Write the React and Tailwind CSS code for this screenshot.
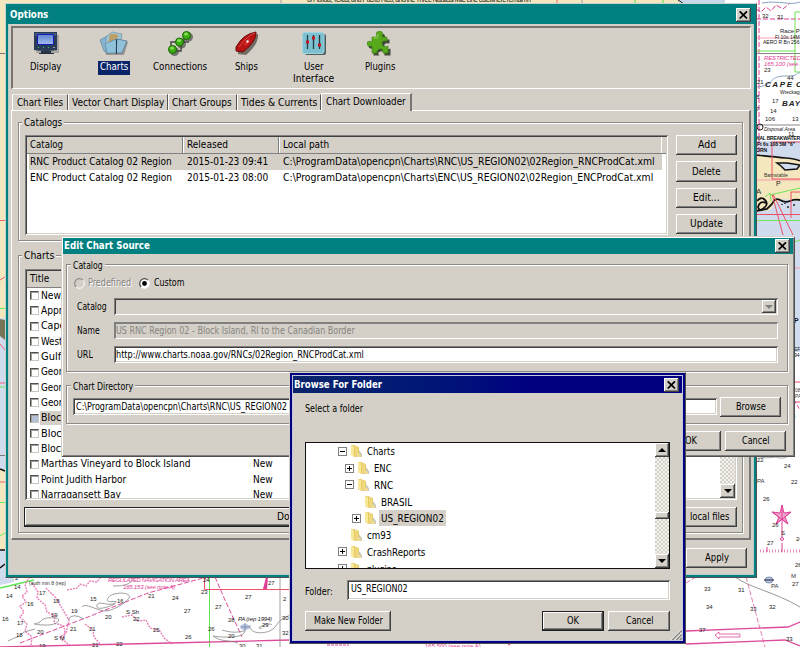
import { useLayoutEffect, useRef, useState } from "react";

const RAISED = "bg-[#d4d0c8] shadow-[inset_-1px_-1px_0_#404040,inset_1px_1px_0_#fff,inset_-2px_-2px_0_#808080]";
const SUNKEN = "shadow-[inset_1px_1px_0_#808080,inset_-1px_-1px_0_#fff,inset_2px_2px_0_#404040,inset_-2px_-2px_0_#d4d0c8]";

// Text condensed horizontally to occupy exactly w pixels.
function T({ w, children, className = "" }) {
  const ref = useRef(null);
  const [s, setS] = useState(1);
  useLayoutEffect(() => {
    setS(w / ref.current.offsetWidth);
  }, [w, children]);
  return (
    <span className={"block shrink-0 whitespace-nowrap " + className} style={{ width: w }}>
      <span ref={ref} className="inline-block origin-left" style={{ transform: `scaleX(${s})` }}>
        {children}
      </span>
    </span>
  );
}

function Btn({ children, w, className = "", dark }) {
  return (
    <div className={`flex shrink-0 items-center justify-center ${RAISED} ${dark ? "border border-[#202020]" : ""} ${className}`}>
      {w ? <T w={w}>{children}</T> : children}
    </div>
  );
}

function Close() {
  return (
    <div className={`flex h-[14px] w-[15px] items-center justify-center ${RAISED}`}>
      <svg width="9" height="8" viewBox="0 0 9 8" stroke="#000" strokeWidth="1.7">
        <path d="M0.7 0.3 8 7.5M8 0.3 0.7 7.5" />
      </svg>
    </div>
  );
}

function Group({ label, lw, className = "", children, big }) {
  return (
    <div className={`relative border border-[#8c8a86] shadow-[1px_1px_0_#fff,inset_1px_1px_0_#fff] ${className}`}>
      <div className={`absolute bg-[#d4d0c8] px-[2px] leading-[13px] ${big ? "top-[-7px] left-[3px]" : "top-[-6px] left-[4px]"}`}>
        <T w={lw}>{label}</T>
      </div>
      {children}
    </div>
  );
}

function Arrow({ up, grey }) {
  return (
    <svg width="8" height="4" viewBox="0 0 8 4" fill={grey ? "#808080" : "#000"}>
      <path d={up ? "M0 4H8L4 0Z" : "M0 0H8L4 4Z"} />
    </svg>
  );
}

const DITHER = "bg-[repeating-conic-gradient(#d4d0c8_0_25%,#f4f3f0_0_50%)] bg-[length:4px_4px]";

/* ---------- nautical chart behind the windows ---------- */
const soundings = [
  [9, 598, "14"], [5, 621, "16"], [30, 606, "16"], [42, 595, "17"], [56, 603, "18"], [54, 617, "19"], [74, 613, "19"],
  [20, 625, "17"], [19, 637, "18"], [40, 634, "20"], [73, 631, "21"], [92, 631, "21"], [108, 619, "20"], [136, 621, "22"],
  [93, 601, "15"], [120, 603, "16"], [151, 598, "21"], [175, 600, "24"], [187, 613, "27"], [156, 632, "25"], [188, 639, "26"],
  [95, 647, "21"], [119, 646, "22"], [42, 648, "19"], [204, 594, "23"], [206, 582, "24"], [248, 599, "27"], [218, 609, "27"],
  [231, 622, "28"], [211, 631, "26"], [231, 638, "20"], [265, 627, "29"], [271, 585, "27"], [286, 601, "2"], [285, 620, "30"],
  [285, 635, "32"], [242, 648, "30"], [259, 648, "31"], [17, 589, "14"], [18, 580, "2"],
  [707, 591, "33"], [741, 592, "31"], [709, 609, "34"], [753, 611, "33"], [772, 609, "32"], [702, 632, "37"], [789, 641, "33"],
  [760, 462, "22"], [787, 468, "24"], [794, 484, "22"], [766, 501, "26"], [775, 527, "26"], [770, 545, "27"], [799, 541, "24"],
  [798, 567, "26"], [795, 586, "27"], [765, 18, "32"], [780, 19, "31"], [767, 72, "23"], [773, 113, "14"], [775, 103, "17"],
  [768, 121, "106"], [795, 121, "13"], [791, 136, "11"], [795, 418, "8"], [790, 80, "44"], [760, 84, "21"], [759, 99, "8"], [759, 111, "7"],
];

function ChartMap() {
  return (
    <svg className="absolute inset-0" width="800" height="647" fontFamily="'Liberation Sans', Arial, sans-serif" fill="none">
      <rect width="800" height="647" fill="#fff" />
      <rect width="680" height="4" fill="#f4e7bd" />
      <path d="M678 0H725V4H683Z" fill="#c9d7ea" />
      <path d="M678 0 684 4" stroke="#111" />
      <path d="M557 0V4" stroke="#e66" /><path d="M582 0V4M281 0V4" stroke="#999" />
      <path d="M635 0V4M663 0V4" stroke="#5d5" />
      <text x="307" y="2" fontSize="7" fill="#222" textLength="224">of Florida, Texas, and Puerto Rico, and the Three Nautical Mile Line elsewhere remain in</text>
      {/* left strip */}
      <rect y="0" width="6" height="320" fill="#f4e7bd" />
      <rect y="318" width="6" height="155" fill="#d1dbee" />
      <rect y="470" width="6" height="80" fill="#f4e7bd" />
      <rect y="550" width="6" height="30" fill="#d1dbee" />
      <path d="M0 319 5 320 5 340 0 336Z" fill="#777456" />
      <path d="M0 53.500H5M0 455.500H5" stroke="#777" />
      <path d="M0 220.500H5M0 280 5 277M0 344 5 350M0 383H5M0 482H5" stroke="#f0607a" />
      <path d="M0 308.500H5M0 387H5M0 502.500H5M0 536 5 533" stroke="#6e5" />
      <path d="M0 469 5 471M0 550H5M0 568 5 564" stroke="#111" strokeWidth="1.500" />
      {/* right side: bay and coast */}
      <path d="M756 141H800V330H756Z" fill="#d1dbee" />
      <path d="M794 230H800V352H794Z" fill="#d1dbee" />
      <path d="M756 154 800 160 800 201 783 199 775 203 770 210 756 212Z" fill="#f4e7bd" />
      <path d="M756 155Q775 157 786 158T800 161" stroke="#111" strokeWidth="1.500" />
      <path d="M777 163H787L800 165 797 169 785 170 781 166Z" fill="#d1dbee" stroke="#111" strokeWidth="1.500" />
      <path d="M756 211 767 209 772 204Q775 197 780 200T790 201 800 200" stroke="#111" strokeWidth="1.800" />
      <path d="M757 201Q761 196 765 200T764 208 758 207Q760 200 766 203" stroke="#111" strokeWidth="1.800" />
      <path d="M782 204v1M788 206v2M794 204v2M785 203v1" stroke="#222" strokeWidth="1.500" />
      <path d="M756 9 761 12 766 7 771 11 776 5 783 9 790 3M759 0V155M756 19H800" stroke="#de3e96" strokeDasharray="5 2" />
      <path d="M756 38H800M756 180H800M794 268H800" stroke="#f6a0b0" />
      <path d="M772 143V179H800M772 142H800M791 218V192H800M756 214.500H800M772 194 783 235M773 194 793 235M794 382H800M794 402H800" stroke="#ee4f64" />
      <path d="M756 51H795V12H800M795 51V72H800M756 220.500H800M770 195 800 188M765 197 770 193 771 201M794 242 800 240" stroke="#70e455" />
      <path d="M756 53.500H800M756 125H800" stroke="#888" />
      <path d="M756 87C775 86 768 76 785 76S795 72 800 73M762 3C780 0 790 6 800 2" stroke="#8aa4c0" />
      <circle cx="760" cy="127" r="3" stroke="#222" />
      <text x="780" y="33" fontSize="6" fill="#222">Race Pt</text>
      <text x="775" y="39" fontSize="5" fill="#222">Fl 10s 14M</text>
      <text x="763" y="44" fontSize="5" fill="#111">AERO R Bn 256</text>
      <g fontSize="6" fill="#de3e96" fontStyle="italic"><text x="764" y="60" textLength="37">RESTRICTED</text><text x="764" y="66" textLength="39">165.100 (see n</text></g>
      <g fontStyle="italic" fontSize="8" fill="#222" fontWeight="bold"><text x="765" y="87" textLength="27">CAPE</text><text x="796" y="87">C</text><text x="782" y="106" textLength="18">BAY</text></g>
      <text x="780" y="94" fontSize="5" fill="#222">Wreckage</text>
      <text x="764" y="131" fontSize="5" fill="#222" fontStyle="italic">Disposal Area</text>
      <g fontSize="5" fill="#111" fontWeight="bold"><text x="756" y="140" textLength="44">NAL BREAKWATER</text><text x="757" y="146" textLength="38">Ft 6s 108 5M "6"</text><text x="756" y="152">ORN</text></g>
      <text x="764" y="177" fontSize="5" fill="#333">Barnstable</text>
      <text x="776" y="186" fontSize="7" fill="#222">P</text><text x="756" y="194" fontSize="8" fill="#333">A</text>
      <text x="794" y="323" fontSize="7" fill="#111" fontWeight="bold">P</text>
      <text x="794" y="351" fontSize="5" fill="#111">EF</text><text x="794" y="357" fontSize="5" fill="#111">94</text>
      <text x="795" y="392" fontSize="5" fill="#444">08</text><text x="795" y="398" fontSize="5" fill="#444">PA</text>
      <path d="M794 400 800 410" stroke="#de3e96" strokeDasharray="4 2" />
      {/* lower right: compass and lanes */}
      <path d="M782 505 784 513 791 512 785 517 788 524 782 519 776 524 779 517 772 512 780 513Z" fill="#f3a6cb" stroke="#de3e96" />
      <path d="M782 505V537M772 512 788 524M791 512 776 524" stroke="#de3e96" />
      <path d="M760 551H800" stroke="#e88abb" strokeWidth="3" strokeDasharray="1 2" />
      <path d="M782 543V552M767 547V552" stroke="#de3e96" />
      <circle cx="782" cy="539" r="1.500" stroke="#de3e96" />
      <path d="M686 583 696 577M746 577 765 647" stroke="#e57fb6" strokeDasharray="5 2" />
      <path d="M735 577C750 588 775 592 800 607" stroke="#999" />
      <path d="M686 631 788 627 800 622M686 644 785 640 800 646" stroke="#de4b9a" strokeWidth="1.300" />
      <path d="M715 635 719 632V634H740V637H719V639Z" stroke="#de4b9a" strokeWidth=".8" />
      <ellipse cx="769" cy="580" rx="4" ry="3" fill="#b8c5dc" stroke="#8092b8" /><path d="M764 580H774" stroke="#223" />
      <text x="771" y="588" fontSize="6" fill="#333">PA</text><text x="757" y="483" fontSize="6" fill="#333">PA</text><text x="791" y="578" fontSize="6" fill="#333">M</text><text x="781" y="535" fontSize="6" fill="#222">S</text>
      <path d="M756 456Q764 459 776 457Q784 461 795 452" stroke="#aaa" />
      {/* lower left */}
      <path d="M0 588 34 580" stroke="#5de552" strokeWidth="1.400" />
      <path d="M209.500 577V647" stroke="#5de552" />
      <path d="M204.500 577V589.500H290" stroke="#f05368" />
      <path d="M0 580 14 577V582L0 585Z" fill="#d1dbee" />
      <path d="M30 577 25 584 27 592 22 596 26 602 20 606 24 612 20 617 27 624 25 631 32 637 31 645M32 583 38 592 37 598 45 605 47 612 55 616 54 623 64 626 65 634 62 642M46 588 56 598 63 610 69 620 66 633 60 637 70 646M67 590 77 588 80 584 86 586 90 581 97 582 101 577M85 624 93 630 94 637 101 645M122 617 132 615 138 621 146 620 150 628 160 631 164 638 172 644" stroke="#e783b9" strokeDasharray="2 1" strokeWidth="1.400" />
      <path d="M20 643 88 617 148 593 207 577M215 577 225 600 242 637" stroke="#de4b9a" strokeDasharray="5 2" />
      <path d="M0 647 170 643 290 640" stroke="#de4b9a" strokeWidth="1.300" />
      <path d="M82 607C84 602 98 611 105 611S125 604 129 598 112 591 108 598 121 599 115 603 99 600 97 605 104 609 115 604M39 623C44 616 51 618 56 618S60 626 43 625 39 623 39 623M8 641C22 634 15 640 24 632L35 629M222 630C240 636 248 627 244 633S218 637 213 636C220 642 230 640 238 643M250 625C248 635 269 635 275 627S280 620 290 615M262 628C252 630 269 621 272 625M280 577V647M84 619Q72 612 68 620M135 577Q130 587 113 586" stroke="#888" strokeWidth=".8" />
      <g fill="#de3e96" fontSize="6" fontStyle="italic"><text x="108" y="582" textLength="82">REGULATED NAVIGATION AREA</text><text x="123" y="589" textLength="52">165.153 (see note A)</text></g>
      <text x="29" y="585" fontSize="5" fill="#333">(auth min 8 (rep)</text>
      <text x="126" y="614" fontSize="6" fill="#222">S Sh</text><text x="54" y="640" fontSize="6" fill="#222">S M</text>
      <text x="238" y="621" fontSize="6" fill="#222" fontStyle="italic" textLength="34">PA (rep 1994)</text>
      <ellipse cx="245" cy="627" rx="5" ry="3" fill="#b8c5dc" /><path d="M241 627H250M245 623V631" stroke="#8092b8" />
      <path d="M266 577 263 589H267L268 577Z" fill="#de3e96" />
      <g fontSize="6" fill="#222" fontFamily="'Liberation Sans'">
        {soundings.map(([x, y, t], i) => <text key={i} x={x - 3} y={y - 0.5}>{t}</text>)}
      </g>
      <text x="425" y="648" fontSize="6" fill="#de3e96">165.500 (see note A)</text>
      <path d="M327 645H349M508 645 515 642" stroke="#de3e96" strokeDasharray="3 1" />
    </svg>
  );
}

/* ---------- toolbar icons ---------- */
const icons = {
  display: (
    <svg width="28" height="26" viewBox="0 0 28 26">
      <path d="M4 4H27V22H4Z" fill="#8b8984" opacity=".6" />
      <path d="M2 1H25V19Q14 21 2 19Z" fill="#293c57" /><path d="M3 2H24V5H3Z" fill="#41587a" />
      <defs><linearGradient id="scr" x2="0" y2="1"><stop stopColor="#5f84cf" /><stop offset="1" stopColor="#a3bdee" /></linearGradient></defs>
      <path d="M5.500 3.500H21.500V13.500H5.500Z" fill="url(#scr)" stroke="#1818b8" />
      <path d="M6 16.500h1M11 16.500h1M16 16.500h1" stroke="#3c6" /><path d="M21 16.500h2" stroke="#999" />
      <path d="M9 20H19V22H22V23H7V22H9Z" fill="#26323f" />
    </svg>
  ),
  charts: (
    <svg width="30" height="26" viewBox="0 0 30 26">
      <path d="M5 9 29 11 25 24 7 24Z" fill="#77736c" opacity=".6" />
      <path d="M1 9 10 4 13 8 9 22 5 20Z" fill="#86b5cf" stroke="#587f96" strokeWidth=".6" />
      <path d="M7 6 13 1 23 3 22 8 18 22 7 22Z" fill="#a0c7d8" stroke="#5f879a" strokeWidth=".6" />
      <path d="M11 3 17 3 20 5 17 8 19 10 12 14 9 12 10 8Z" fill="#bd9e68" />
      <path d="M6 13 17 8 18 22 8 22Z" fill="#8fc1db" stroke="#54758b" strokeWidth=".5" />
      <path d="M18 8 28 10 23 22H17Z" fill="#93c1d9" stroke="#486f88" strokeWidth=".7" /><path d="M17.500 8V23" stroke="#263e52" />
    </svg>
  ),
  connections: (
    <svg width="28" height="26" viewBox="0 0 28 26">
      <g fill="#555750" opacity=".75"><circle cx="8.500" cy="20.500" r="4.500" /><circle cx="15.500" cy="13" r="4.500" /><circle cx="22.500" cy="6" r="4.500" /></g>
      <path d="M5 17V11H18V3M9 20H15V11H23" stroke="#474747" strokeWidth="1.500" fill="none" />
      <g fill="#3bac13" stroke="#176500"><circle cx="6.500" cy="18.500" r="4" /><circle cx="13.500" cy="11" r="4" /><circle cx="20.500" cy="4.500" r="4" /></g>
      <g fill="#87df55"><ellipse cx="6" cy="17" rx="2" ry="1.500" /><ellipse cx="13" cy="9.500" rx="2" ry="1.500" /><ellipse cx="20" cy="3" rx="2" ry="1.500" /></g>
    </svg>
  ),
  ships: (
    <svg width="26" height="26" viewBox="0 0 26 26">
      <path d="M24 3Q25 13 12 24L4 23 4 18Q11 5 24 3Z" fill="#56524d" opacity=".8" />
      <path d="M22 1Q23 10 9 21L2 20 2 16Q9 3 22 1Z" fill="#b81313" stroke="#6b0c0c" />
      <path d="M21 2Q14 4 5 16" stroke="#d84a4a" strokeWidth="1" fill="none" /><path d="M10 13 15 7 16 10 12 15Z" fill="#d62c2c" />
      <circle cx="13.500" cy="10.500" r="1.200" fill="#eee" />
    </svg>
  ),
  ui: (
    <svg width="26" height="26" viewBox="0 0 26 26">
      <rect x="4" y="3" width="21" height="21" rx="2" fill="#4d5b5c" />
      <rect x="1.500" y="1.500" width="21.500" height="21" rx="2" fill="#7dc0d0" stroke="#a2d4df" />
      <path d="M6.500 4V18M12.500 4V18M18.500 4V18" stroke="#263a43" strokeWidth="1.300" />
      <path d="M5 11H8M11 7H14M17 14H20" stroke="#c41420" strokeWidth="3" />
    </svg>
  ),
  plugins: (
    <svg width="26" height="26" viewBox="0 0 26 26">
      <path d="M5 7H10Q8 1 13 1T16 7H21V11Q15 10 16 14T22 16V23H16Q16 18 12 19T11 23H5V16Q0 17 0 13T5 12Z" fill="#424b38" transform="translate(1.500 1.500)" />
      <path d="M5 6H10Q8 0 12.500 0T15 6H20V10Q14 9 15 13T21 15V22H16Q16 17 12.500 18T10 22H5V15Q0 16 0 12.500T5 11Z" fill="#57a91b" stroke="#37820b" strokeWidth=".6" />
      <path d="M6 7H10.500L11 3" stroke="#8fd24d" fill="none" />
    </svg>
  ),
};

function Tool({ icon, label, w, sel, children, className }) {
  return (
    <div className={`flex flex-col items-center leading-[12px] ${className}`}>
      <div className="flex h-[30px] items-start">{icons[icon]}</div>
      <div className={sel ? "bg-[#0a246a] px-[2px] pb-[2px] text-white" : ""}><T w={w}>{label}</T></div>
      {children}
    </div>
  );
}

function Options() {
  const rows = ["New York Harbor", "Approaches to New York", "Cape Cod", "West Quoddy Head", "Gulf of Maine", "Georges Bank East", "Georges Bank West", "Georges Bank", "Block Island Sound", "Block Island", "Block Island East", "Marthas Vineyard to Block Island", "Point Judith Harbor", "Narragansett Bay"];
  const widths = [76, 110, 46, 84, 66, 84, 86, 62, 90, 58, 80, 149, 85, 80];
  const tabs = [["Chart Files", 46, "w-[56px] pl-[4px]"], ["Vector Chart Display", 92, "w-[100px] pl-[3px]"], ["Chart Groups", 60, "w-[69px] pl-[3px]"], ["Tides & Currents", 76, "w-[84px] pl-[3px]"]];
  return (
    <div className="absolute top-[3px] left-[5px] flex h-[575px] w-[752px] flex-col border border-t-[#c4d6d2] border-r-[#505050] border-b-[#505050] border-l-[#c4d6d2] bg-[#d4d0c8] p-[2px] text-[11px] shadow-[inset_0_0_0_2px_#008080,inset_0_0_0_3px_#b9cdc7]">
      <div className="flex h-[18px] shrink-0 items-center justify-between bg-[#008080] pr-[3px] pl-[2px] font-bold text-white">
        <T w={38}>Options</T><Close />
      </div>
      <div className="mx-[3px] mt-[2px] flex h-[63px] shrink-0 border-t-2 border-r border-b border-l-2 border-t-[#777570] border-r-white border-b-white border-l-[#777570] pt-[3px]">
        <Tool icon="display" label="Display" w={31} className="w-[65px]" />
        <Tool icon="charts" label="Charts" w={28} sel className="w-[71px]" />
        <Tool icon="connections" label="Connections" w={54} className="w-[62px]" />
        <Tool icon="ships" label="Ships" w={23} className="w-[71px]" />
        <Tool icon="ui" label="User" w={20} className="w-[63px]"><T w={41}>Interface</T></Tool>
        <Tool icon="plugins" label="Plugins" w={30} className="w-[70px]" />
      </div>
      <div className="mt-[3px] ml-[4px] flex h-[18px] shrink-0 items-end">
        {tabs.map(([t, w, c]) => (
          <div key={t} className={`flex h-[16px] items-center border-t border-r border-l border-t-[#f0eeea] border-r-[#555] border-l-white ${c}`}><T w={w}>{t}</T></div>
        ))}
        <div className="z-10 -mb-px flex h-[18px] w-[91px] items-center border-t border-r-2 border-l border-t-white border-r-[#777] border-l-white bg-[#d4d0c8] pb-px pl-[4px]"><T w={80}>Chart Downloader</T></div>
      </div>
      <div className="mr-[3px] ml-[3px] flex h-[430px] shrink-0 flex-col border-t border-r-2 border-b-2 border-l border-t-white border-r-[#777] border-b-[#777] border-l-white px-[6px] pt-[11px]">
        <Group label="Catalogs" lw={38} big className="flex h-[119px] shrink-0 gap-[8px] pt-[12px] pl-[6px]">
          <div className={`flex h-[100px] w-[643px] shrink-0 flex-col bg-white p-[2px] ${SUNKEN}`}>
            <div className="flex h-[17px] items-center border-b border-[#808080] bg-[#d4d0c8] leading-[16px]">
              <div className="w-[156px] border-r border-[#808080] pl-[3px]"><T w={33}>Catalog</T></div>
              <div className="w-[96px] border-r border-l border-r-[#808080] border-l-white pl-[3px]"><T w={41}>Released</T></div>
              <div className="w-[383px] border-r border-l border-r-white border-l-white pl-[3px]"><T w={46}>Local path</T></div>
            </div>
            {["R", "E"].map((k) => (
              <div key={k} className={`ml-[2px] flex h-[16px] w-[633px] items-center pl-[1px] ${k === "R" ? "bg-[#d4d0c8]" : ""}`}>
                <div className="w-[157px]"><T w={142}>{k + "NC Product Catalog 02 Region"}</T></div>
                <div className="w-[96px]"><T w={81}>{k === "R" ? "2015-01-23 09:41" : "2015-01-23 08:00"}</T></div>
                <T w={k === "R" ? 372 : 370}>{`C:\\ProgramData\\opencpn\\Charts\\${k}NC\\US_REGION02\\02Region_${k}NCProdCat.xml`}</T>
              </div>
            ))}
          </div>
          <div className="flex flex-col gap-[6px]">
            <Btn w={18} className="h-[20px] w-[61px]">Add</Btn>
            <Btn w={29} className="h-[21px] w-[61px]">Delete</Btn>
            <Btn w={27} className="h-[20px] w-[61px]">Edit...</Btn>
            <Btn w={33} className="h-[20px] w-[61px]">Update</Btn>
          </div>
        </Group>
        <Group label="Charts" lw={30} big className="mt-[14px] flex h-[278px] shrink-0 flex-col px-[6px] pt-[13px]">
          <div className={`flex h-[231px] w-[712px] bg-white p-[2px] ${SUNKEN}`}>
            <div className="flex flex-1 flex-col overflow-hidden">
              <div className="flex h-[17px] shrink-0 items-center border-b border-[#808080] bg-[#d4d0c8] pl-[3px]"><T w={19}>Title</T></div>
              {rows.map((r, i) => (
                <div key={r} className="flex h-[15.330px] shrink-0 items-center pl-[3px]">
                  <div className={`h-[9px] w-[9px] border border-t-[#505050] border-r-[#c9c6bf] border-b-[#c9c6bf] border-l-[#505050] shadow-[inset_1px_1px_0_#a09e98] ${i === 8 ? "bg-[#b5c0d8]" : ""}`} />
                  <div className={`ml-[1px] w-[213px] pl-[1px] ${i === 8 ? "bg-[#d4d0c8]" : ""}`}><T w={widths[i]}>{r}</T></div>
                  <T w={20}>New</T>
                </div>
              ))}
            </div>
            <div className={`flex w-[15px] flex-col justify-end ${DITHER}`}><Btn className="h-[14px]"><Arrow /></Btn></div>
          </div>
          <div className="mt-[7px] mr-[-1px] ml-[-1px] flex h-[20px] justify-between">
            <div className={`flex w-[500px] items-center border border-[#202020] pl-[252px] ${RAISED}`}><T w={118}>Download selected charts</T></div>
            <div className={`flex w-[150px] items-center justify-end pr-[8px] ${RAISED}`}><T w={39}>local files</T></div>
          </div>
        </Group>
      </div>
      <div className="mt-[8px] mr-[7px] flex justify-end"><Btn w={24} className="h-[20px] w-[61px]">Apply</Btn></div>
    </div>
  );
}

function Radio({ on }) {
  return (
    <svg width="11" height="11" viewBox="0 0 11 11" className="shrink-0">
      <circle cx="5.500" cy="5.500" r="4.800" fill={on ? "#fff" : "#d4d0c8"} stroke="#fff" />
      <path d="M2.100 8.900A4.800 4.800 0 0 1 8.900 2.100" fill="none" stroke={on ? "#404040" : "#808080"} strokeWidth="1.200" />
      {on && <circle cx="5.500" cy="5.500" r="2.400" fill="#000" />}
    </svg>
  );
}

function EditSource() {
  return (
    <div className="absolute top-[236px] left-[61px] flex h-[221px] w-[734px] flex-col bg-[#d4d0c8] p-[2px] text-[10px] shadow-[inset_1px_1px_0_#d4d0c8,inset_-1px_-1px_0_#505050,inset_2px_2px_0_#fff,inset_-2px_-2px_0_#808080]">
      <div className="flex h-[16px] shrink-0 items-center justify-between bg-[#008080] pr-[3px] pl-[1px] text-[11px] font-bold text-white">
        <T w={86}>Edit Chart Source</T><Close />
      </div>
      <Group label="Catalog" lw={30} className="mx-[3px] mt-[10px] flex h-[108px] w-[722px] flex-col px-[7px] pt-[12px]">
        <div className="flex h-[12px] items-center">
          <Radio /><T w={43} className="ml-[3px] text-[#868480] [text-shadow:1px_1px_0_#fff]">Predefined</T>
          <div className="w-[8px]" /><Radio on /><T w={30} className="ml-[4px]">Custom</T>
        </div>
        <div className="mt-[9px] flex h-[17px] items-center pl-[3px]">
          <div className="w-[37px]"><T w={30}>Catalog</T></div>
          <div className={`flex h-[17px] w-[664px] items-center justify-end p-[2px] ${SUNKEN}`}><Btn className="h-[13px] w-[14px]"><Arrow grey /></Btn></div>
        </div>
        <div className="mt-[7px] flex h-[17px] items-center pl-[3px]">
          <div className="w-[37px]"><T w={23}>Name</T></div>
          <div className="flex h-[17px] w-[664px] items-center border-t-2 border-r border-b border-l-2 border-t-[#808080] border-r-white border-b-white border-l-[#808080] text-[#868480]"><T w={239}>US RNC Region 02 - Block Island, RI to the Canadian Border</T></div>
        </div>
        <div className="mt-[7px] flex h-[17px] items-center pl-[3px]">
          <div className="w-[37px]"><T w={16}>URL</T></div>
          <div className={`flex h-[17px] w-[664px] items-center bg-white pl-[2px] ${SUNKEN}`}><T w={248}>http://www.charts.noaa.gov/RNCs/02Region_RNCProdCat.xml</T></div>
        </div>
      </Group>
      <Group label="Chart Directory" lw={60} className="mx-[3px] mt-[13px] flex h-[39px] w-[722px] items-center gap-[3px] pt-[4px] pl-[6px]">
        <div className={`flex h-[17px] w-[644px] items-center bg-white pl-[3px] ${SUNKEN}`}><T w={211}>C:\ProgramData\opencpn\Charts\RNC\US_REGION02</T></div>
        <Btn w={30} className="h-[20px] w-[61px]">Browse</Btn>
      </Group>
      <div className="mt-[7px] mr-[7px] flex justify-end gap-[4px]">
        <Btn w={12} className="h-[20px] w-[61px]">OK</Btn><Btn w={27} className="h-[20px] w-[61px]">Cancel</Btn>
      </div>
    </div>
  );
}

function Folder() {
  return (
    <svg width="13" height="14" viewBox="0 0 13 14" className="shrink-0">
      <path d="M8 5 12 10 12 13 6 13Z" fill="#c8c8b8" />
      <path d="M1 1 5 1 6 3 9 3V11L5 13 1 11Z" fill="#e9cb63" /><path d="M1 1 4 2V13L1 11Z" fill="#f8e99a" /><path d="M5 2H8V11L5 12Z" fill="#efd77d" />
      <path d="M7 8 11 11V13L7 13Z" fill="#efd98e" />
    </svg>
  );
}

function Expander({ k }) {
  if (!k) return <div className="w-[9px] shrink-0" />;
  return (
    <svg width="9" height="9" className="shrink-0" shapeRendering="crispEdges">
      <path d="M.5.5H8.500V8.500H.5Z" fill="#fff" stroke="#808080" /><path d={k === "+" ? "M2 4.500H7M4.500 2V7" : "M2 4.500H7"} stroke="#000" />
    </svg>
  );
}

function Browse() {
  const tree = [
    ["Charts", 28, "-", "pl-[32px]"], ["ENC", 18, "+", "pl-[39px]"], ["RNC", 19, "-", "pl-[39px]"], ["BRASIL", 31, "", "pl-[46px]"],
    ["US_REGION02", 63, "+", "pl-[46px]"], ["cm93", 24, "", "pl-[32px]"], ["CrashReports", 58, "+", "pl-[32px]"], ["plugins", 29, "+", "pl-[32px]"],
  ];
  return (
    <div className="absolute top-[372px] left-[289px] flex h-[272px] w-[397px] flex-col border border-t-[#d4d0c8] border-r-[#505050] border-b-[#505050] border-l-[#d4d0c8] bg-[#d4d0c8] p-[3px] text-[10px] shadow-[inset_0_0_0_2px_#000080,inset_0_0_0_3px_#c4c6dd]">
      <div className="flex h-[17px] shrink-0 items-center justify-between bg-linear-to-r from-[#0a246a] to-[#000080] to-60% pr-[3px] pl-px text-[11px] font-bold text-white">
        <T w={88}>Browse For Folder</T><Close />
      </div>
      <div className="flex flex-1 flex-col px-[12px] pt-[9px]">
        <T w={58}>Select a folder</T>
        <div className="mt-[26px] flex h-[127px] w-[365px] shrink-0 border border-[#111] bg-white">
          <div className="flex flex-1 flex-col overflow-hidden">
            {tree.map(([t, w, k, pad]) => (
              <div key={t} className={`flex h-[16.750px] shrink-0 items-center ${pad}`}>
                <Expander k={k} /><div className="ml-[3px]"><Folder /></div>
                <div className={`ml-[2px] flex h-[16px] items-center pr-[2px] pl-[2px] text-[10.500px] ${t === "US_REGION02" ? "bg-[#d4d0c8]" : ""}`}><T w={w}>{t}</T></div>
              </div>
            ))}
          </div>
          <div className={`flex w-[14px] flex-col ${DITHER}`}>
            <Btn className="h-[14px]"><Arrow up /></Btn><Btn className="mt-[55px] h-[7px]" /><Btn className="mt-auto h-[14px]"><Arrow /></Btn>
          </div>
        </div>
        <div className="mt-[11px] flex h-[20px] shrink-0 items-center">
          <div className="w-[42px] pt-[4px]"><T w={28}>Folder:</T></div>
          <div className={`flex h-[20px] w-[323px] items-center bg-white pb-[2px] pl-[4px] ${SUNKEN}`}><T w={57}>US_REGION02</T></div>
        </div>
        <div className="mt-[11px] flex h-[20px]">
          <Btn w={69} className="w-[86px]">Make New Folder</Btn>
          <Btn w={12} dark className="ml-auto w-[62px]">OK</Btn>
          <Btn w={27} className="ml-[4px] w-[62px]">Cancel</Btn>
        </div>
      </div>
      <svg className="absolute right-[3px] bottom-[3px]" width="12" height="12"><path d="M2 12 12 2M6 12 12 6M10 12 12 10" stroke="#808080" strokeWidth="1.500" /><path d="M1 12 12 1M5 12 12 5" stroke="#fff" strokeWidth=".7" /></svg>
    </div>
  );
}

export default function App() {
  return (
    <div className="relative h-[647px] w-[800px] overflow-hidden leading-[14px] text-black [font-family:'DejaVu_Sans_Condensed','DejaVu_Sans',sans-serif]">
      <ChartMap />
      <Options />
      <EditSource />
      <Browse />
    </div>
  );
}
